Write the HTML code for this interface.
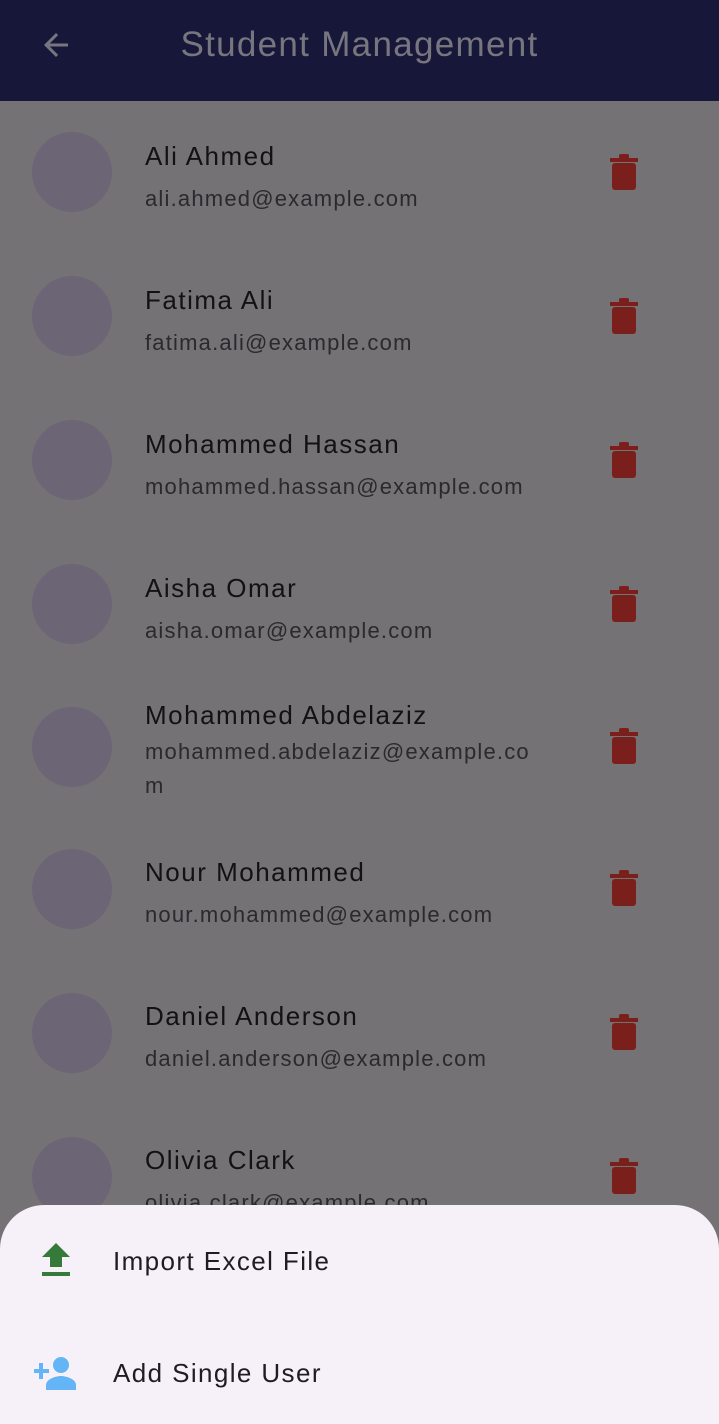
<!DOCTYPE html>
<html><head><style>
*{margin:0;padding:0;box-sizing:border-box}
body{width:719px;height:1424px;overflow:hidden;background:#747275;font-family:"Liberation Sans",sans-serif;position:relative}
.bar{position:absolute;left:0;top:0;width:719px;height:101px;background:#17173a}
.title{position:absolute;left:0;width:719px;top:25px;text-align:center;font-size:35px;color:#77767f;letter-spacing:1.3px}
.av{position:absolute;left:32px;width:80px;height:80px;border-radius:50%;background:#6b6576}
.nm{position:absolute;left:145px;font-size:26px;color:#121214;letter-spacing:1.5px;line-height:30px}
.em{position:absolute;left:145px;font-size:22px;color:#2a292c;letter-spacing:1.2px;line-height:34px;width:400px}
.tr{position:absolute;left:610px}
.sheet{position:absolute;left:0;top:1205px;width:719px;height:219px;background:#f6f1f8;border-radius:44px 44px 0 0}
.opt{position:absolute;left:113px;font-size:26px;color:#1e1d22;letter-spacing:1.4px}
</style></head><body>
<div class="bar"></div>
<svg style="position:absolute;left:38px;top:27px" width="36" height="36" viewBox="0 0 24 24"><path d="M20 11H7.83l5.59-5.59L12 4l-8 8 8 8 1.41-1.41L7.83 13H20v-2z" fill="#77767f"/></svg>
<div class="title">Student Management</div>

<div class="av" style="top:132px"></div><div class="nm" style="top:141px">Ali Ahmed</div><div class="em" style="top:182px">ali.ahmed@example.com</div>
<div class="av" style="top:276px"></div><div class="nm" style="top:285px">Fatima Ali</div><div class="em" style="top:326px">fatima.ali@example.com</div>
<div class="av" style="top:420px"></div><div class="nm" style="top:429px">Mohammed Hassan</div><div class="em" style="top:470px">mohammed.hassan@example.com</div>
<div class="av" style="top:564px"></div><div class="nm" style="top:573px">Aisha Omar</div><div class="em" style="top:614px">aisha.omar@example.com</div>
<div class="av" style="top:707px"></div><div class="nm" style="top:700px">Mohammed Abdelaziz</div><div class="em" style="top:735px">mohammed.abdelaziz@example.co<br>m</div>
<div class="av" style="top:849px"></div><div class="nm" style="top:857px">Nour Mohammed</div><div class="em" style="top:898px">nour.mohammed@example.com</div>
<div class="av" style="top:993px"></div><div class="nm" style="top:1001px">Daniel Anderson</div><div class="em" style="top:1042px">daniel.anderson@example.com</div>
<div class="av" style="top:1137px"></div><div class="nm" style="top:1145px">Olivia Clark</div><div class="em" style="top:1186px">olivia.clark@example.com</div>

<svg width="0" height="0" style="position:absolute"><defs><g id="t"><rect x="0" y="5" width="28" height="4" fill="#7a1f1c"/><rect x="9" y="1" width="10" height="5" rx="2" fill="#7a1f1c"/><rect x="2" y="10" width="24" height="27" rx="3" fill="#7a1f1c"/></g></defs></svg>
<svg class="tr" style="top:153px" width="28" height="38"><use href="#t"/></svg>
<svg class="tr" style="top:297px" width="28" height="38"><use href="#t"/></svg>
<svg class="tr" style="top:441px" width="28" height="38"><use href="#t"/></svg>
<svg class="tr" style="top:585px" width="28" height="38"><use href="#t"/></svg>
<svg class="tr" style="top:727px" width="28" height="38"><use href="#t"/></svg>
<svg class="tr" style="top:869px" width="28" height="38"><use href="#t"/></svg>
<svg class="tr" style="top:1013px" width="28" height="38"><use href="#t"/></svg>
<svg class="tr" style="top:1157px" width="28" height="38"><use href="#t"/></svg>

<div class="sheet"></div>
<svg style="position:absolute;left:42px;top:1243px" width="28" height="34" viewBox="0 0 28 34"><path d="M14 0L28 14H20V24H8V14H0Z" fill="#357a38"/><rect x="0" y="29" width="28" height="4" fill="#357a38"/></svg>
<div class="opt" style="top:1246px">Import Excel File</div>
<svg style="position:absolute;left:34px;top:1356px" width="46" height="34" viewBox="0 0 46 34"><path d="M5 7h4v6h6v4H9v6H5v-6H-1v-4h6z" fill="#64b5f6"/><circle cx="27" cy="9" r="8" fill="#64b5f6"/><path d="M12 34v-5c0-6 10-9 15-9s15 3 15 9v5z" fill="#64b5f6"/></svg>
<div class="opt" style="top:1358px">Add Single User</div>
</body></html>
